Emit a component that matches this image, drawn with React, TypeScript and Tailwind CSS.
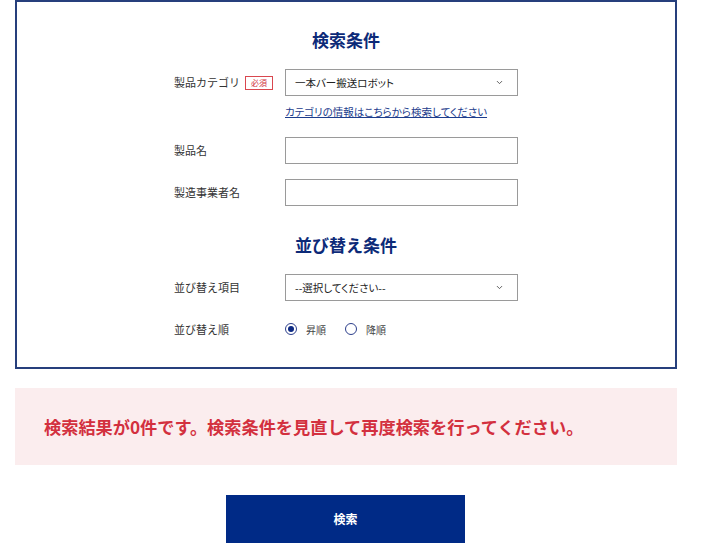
import { ChevronDown } from "lucide-react";

const font = { fontFamily: '"Noto Sans CJK JP", "Noto Sans", sans-serif' };

function Select({ value }: { value: string }) {
	return (
		<div className="flex h-[27px] w-[233px] items-center justify-between border border-[#9a9a9a] bg-white pl-[9px] pr-[13px] text-[10.5px] text-[#222] [font-feature-settings:'palt']">
			<span>{value}</span>
			<ChevronDown className="h-[9px] w-[9px] text-[#555]" strokeWidth={2.5} />
		</div>
	);
}

function TextInput() {
	return <div className="h-[27px] w-[233px] border border-[#9a9a9a] bg-white" />;
}

function Label({ children }: { children: React.ReactNode }) {
	return (
		<div className="flex w-[111px] shrink-0 items-center text-[11px] text-[#333]">
			{children}
		</div>
	);
}

function Radio({ checked, label }: { checked?: boolean; label: string }) {
	return (
		<label className="flex items-center gap-[9px]">
			<span className="flex h-[12px] w-[12px] items-center justify-center rounded-full border border-[#2d3f8c] bg-white">
				{checked && <span className="h-[6px] w-[6px] rounded-full bg-[#0d2a83]" />}
			</span>
			<span className="text-[10px] text-[#444]">{label}</span>
		</label>
	);
}

export default function App() {
	return (
		<div className="min-h-screen w-[702px] bg-white" style={font}>
			<div className="ml-[15px] w-[662px] border-2 border-[#263f7c] pb-[29px] pt-[27px]">
				<h2 className="text-center text-[17px] font-bold leading-[22px] text-[#0c2a78]">
					検索条件
				</h2>

				<div className="mx-auto mt-[18px] w-[344px]">
					<div className="flex">
						<Label>
							<span>製品カテゴリ</span>
							<span className="ml-[5px] border border-[#d9474f] px-[5px] text-[8px] leading-[12px] text-[#d03040]">
								必須
							</span>
						</Label>
						<Select value="一本バー搬送ロボット" />
					</div>
					<div className="ml-[111px] mt-[6px] h-[14px] leading-[14px]">
						<a className="text-[10.5px] text-[#1c3c8c] underline [font-feature-settings:'palt']">
							カテゴリの情報はこちらから検索してください
						</a>
					</div>

					<div className="mt-[21px] flex">
						<Label>製品名</Label>
						<TextInput />
					</div>
					<div className="mt-[15px] flex">
						<Label>製造事業者名</Label>
						<TextInput />
					</div>
				</div>

				<h2 className="mt-[28px] text-center text-[17px] font-bold leading-[22px] text-[#0c2a78]">
					並び替え条件
				</h2>

				<div className="mx-auto mt-[18px] w-[344px]">
					<div className="flex">
						<Label>並び替え項目</Label>
						<Select value="--選択してください--" />
					</div>
					<div className="mt-[19px] flex h-[18px]">
						<Label>並び替え順</Label>
						<div className="flex items-center gap-[19px]">
							<Radio checked label="昇順" />
							<Radio label="降順" />
						</div>
					</div>
				</div>
			</div>

			<div className="ml-[15px] mt-[19px] flex h-[77px] w-[662px] items-center bg-[#fbedee] pl-[29px]">
				<p className="text-[17.2px] font-bold text-[#d3303e]">
					検索結果が0件です。検索条件を見直して再度検索を行ってください。
				</p>
			</div>

			<div className="mt-[30px] flex">
				<button className="ml-[226px] h-[48px] w-[239px] bg-[#002a86] text-[12px] font-bold text-white">
					検索
				</button>
			</div>
		</div>
	);
}
